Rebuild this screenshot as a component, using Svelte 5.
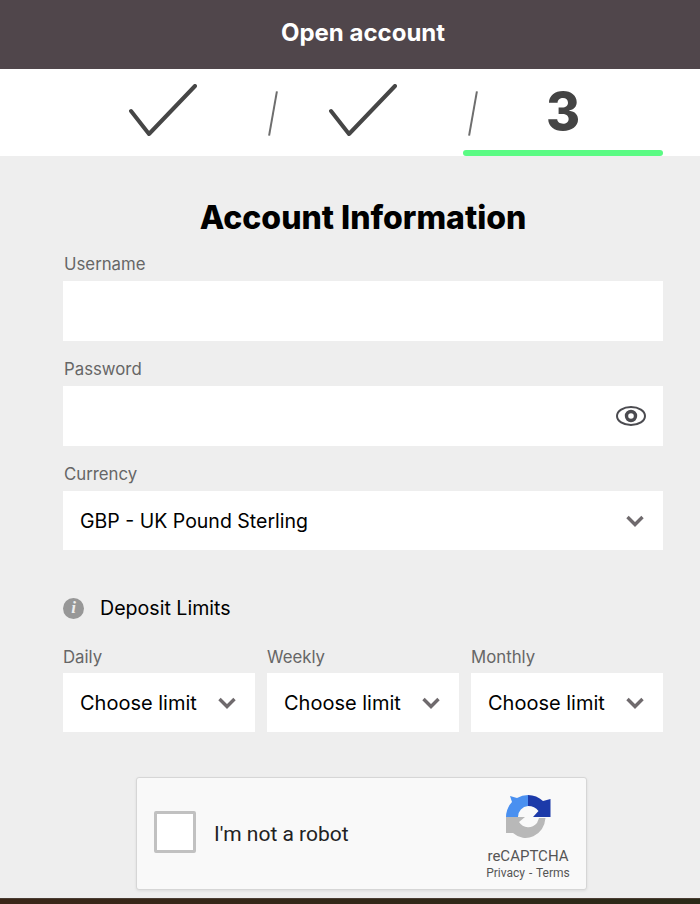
<script>
  const limits = ['Daily', 'Weekly', 'Monthly'];
</script>

{#snippet chevron()}
  <svg class="chevron" width="18" height="12" viewBox="0 0 18 12">
    <path d="M1.500 2 9 9.500 16.500 2" fill="none" stroke="#6f6a6d" stroke-width="3.400" />
  </svg>
{/snippet}

{#snippet tick()}
  <svg width="68" height="52" viewBox="0 0 68 52">
    <path d="M2 27 20 50 66 2" fill="none" stroke="#464646" stroke-width="4" stroke-linecap="round" stroke-linejoin="round" />
  </svg>
{/snippet}

<div class="clip">
  <div class="page">
    <header class="top">Open account</header>

    <nav class="steps">
      <div class="step">{@render tick()}</div>
      <div class="step slashed">{@render tick()}</div>
      <div class="step slashed active"><span class="num">3</span></div>
    </nav>

    <main class="form">
      <h1>Account Information</h1>

      <label class="field">
        <span class="lbl">Username</span>
        <div class="box"></div>
      </label>

      <label class="field">
        <span class="lbl">Password</span>
        <div class="box">
          <svg class="eye" width="30" height="20" viewBox="0 0 30 20">
            <ellipse cx="15" cy="10" rx="14" ry="9" fill="none" stroke="#4b4b50" stroke-width="2" />
            <circle cx="15" cy="10" r="4.500" fill="none" stroke="#4b4b50" stroke-width="3.400" />
          </svg>
        </div>
      </label>

      <label class="field">
        <span class="lbl">Currency</span>
        <div class="box sel">
          <span class="wide">GBP - UK Pound Sterling</span>
          {@render chevron()}
        </div>
      </label>

      <div class="deposit">
        <span class="info">i</span>
        <span>Deposit Limits</span>
      </div>

      <div class="limits">
        {#each limits as name}
          <label class="limit">
            <span class="lbl">{name}</span>
            <div class="box sel">
              <span>Choose limit</span>
              {@render chevron()}
            </div>
          </label>
        {/each}
      </div>

      <div class="captcha">
        <div class="check"></div>
        <span class="robot">I'm not a robot</span>
        <div class="brand">
          <svg width="45" height="46" viewBox="0 0 45 46">
            <path d="M12 22H0A22 22 0 0 1 6 7L4 1 11 3A22 22 0 0 1 22 0V11A11 11 0 0 0 12 22Z" fill="#4a90f0" />
            <path d="M22 0A22 22 0 0 1 37 6L44.500 4V22H27L32.500 16A13 13 0 0 0 22 11Z" fill="#1c3aa9" />
            <path d="M0 22H19L13 27A11 11 0 0 0 31 28L33 23H39.500A20 22 0 0 1 7 38L0 38Z" fill="#b8b8b8" />
          </svg>
          <span class="name">reCAPTCHA</span>
          <span class="links">Privacy - Terms</span>
        </div>
      </div>
    </main>
    <div class="strip"></div>
  </div>
</div>

<style>
  :global(body) {
    margin: 0;
    background: #eeeeee;
  }

  .clip {
    width: 700px;
    overflow: hidden;
  }

  .page {
    width: 726px;
    height: 904px;
    display: flex;
    flex-direction: column;
    font-family: Inter, "Liberation Sans", sans-serif;
    color: #000;
  }

  .top {
    height: 69px;
    flex: none;
    display: flex;
    align-items: center;
    justify-content: center;
    background: #50464b;
    color: #fff;
    font-weight: 700;
    font-size: 24px;
    padding-bottom: 5px;
    box-sizing: border-box;
  }

  .steps {
    height: 87px;
    flex: none;
    background: #fff;
    display: grid;
    grid-template-columns: repeat(3, 200px);
    justify-content: center;
  }

  .step {
    position: relative;
    display: flex;
    justify-content: center;
    align-items: flex-start;
    padding-top: 15px;
  }

  .slashed::before {
    content: "";
    position: absolute;
    left: 9px;
    top: 22px;
    width: 2px;
    height: 45px;
    background: #6e6e6e;
    transform: rotate(10deg);
  }

  .active::after {
    content: "";
    position: absolute;
    left: 0;
    right: 0;
    bottom: 0;
    height: 6px;
    border-radius: 3px;
    background: #5bfb84;
  }

  .num {
    font-weight: 800;
    font-size: 52px;
    line-height: 56px;
    color: #444;
  }

  .form {
    flex: 1;
    width: 600px;
    margin: 0 auto;
    display: flex;
    flex-direction: column;
  }

  h1 {
    margin: 44px 0 0;
    font-size: 32px;
    line-height: 36px;
    font-weight: 800;
    text-align: center;
  }

  .field {
    display: block;
    margin-top: 17px;
  }

  .field + .field {
    margin-top: 17px;
  }

  .lbl {
    display: block;
    font-size: 16.800px;
    line-height: 22px;
    margin-left: 1px;
    margin-bottom: 6px;
    color: #666;
  }

  .box {
    height: 60px;
    background: #fff;
    display: flex;
    align-items: center;
    justify-content: flex-end;
    padding: 0 19px 0 17px;
    font-size: 20px;
  }

  .sel {
    justify-content: space-between;
    height: 59px;
    box-sizing: border-box;
    padding-top: 1px;
  }

  .wide {
    font-size: 19.500px;
  }

  .eye {
    margin-right: -2px;
  }

  .deposit {
    display: flex;
    align-items: center;
    gap: 16px;
    margin-top: 46px;
    font-size: 19.600px;
    line-height: 24px;
  }

  .info {
    width: 21px;
    height: 21px;
    border-radius: 50%;
    background: #979797;
    color: #eee;
    display: flex;
    align-items: center;
    justify-content: center;
    font-family: "Liberation Serif", serif;
    font-style: italic;
    font-weight: 700;
    font-size: 17px;
  }

  .limits {
    display: grid;
    grid-template-columns: repeat(3, 192px);
    justify-content: space-between;
    margin-top: 26px;
  }

  .limit .lbl {
    margin-left: 0;
    margin-bottom: 5px;
  }

  .captcha {
    box-sizing: border-box;
    width: 451px;
    height: 113px;
    margin: 45px 0 0 73px;
    background: #f9f9f9;
    border: 1px solid #d6d6d6;
    border-radius: 3px;
    box-shadow: 0 1px 3px rgba(0, 0, 0, 0.08);
    display: flex;
    align-items: center;
    font-family: Roboto, sans-serif;
  }

  .check {
    box-sizing: border-box;
    width: 42px;
    height: 42px;
    margin: 0 0 4px 17px;
    background: #fff;
    border: 3px solid #c1c1c1;
    border-radius: 2px;
  }

  .robot {
    margin-left: 18px;
    font-size: 21px;
    color: #222;
  }

  .brand {
    margin-left: auto;
    width: 84px;
    margin-right: 16px;
    padding-top: 9px;
    display: flex;
    flex-direction: column;
    align-items: center;
    color: #555;
  }

  .name {
    font-size: 15px;
    line-height: 18px;
    margin-top: 6px;
  }

  .links {
    font-size: 12px;
    line-height: 16px;
    word-spacing: 1px;
    white-space: nowrap;
  }

  .strip {
    height: 6px;
    flex: none;
    background: linear-gradient(90deg, #3a2618, #2a2a18);
    border-top: 1px solid #4a3d33;
    box-sizing: border-box;
  }
</style>
